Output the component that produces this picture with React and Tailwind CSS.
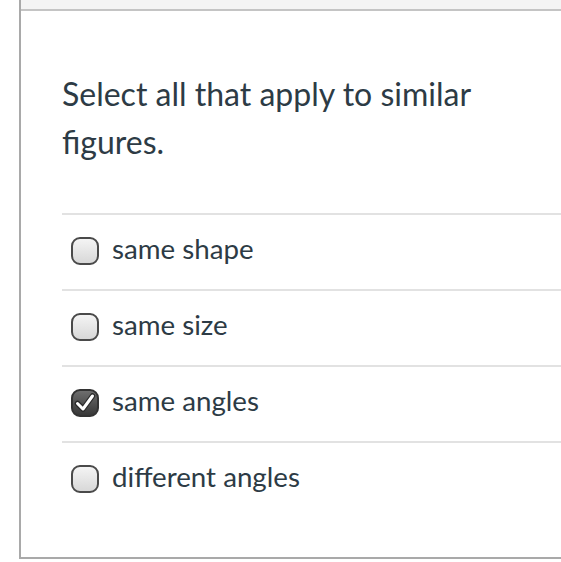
import React from 'react';

const options = [
  { label: 'same shape', checked: false },
  { label: 'same size', checked: false },
  { label: 'same angles', checked: true },
  { label: 'different angles', checked: false },
];

function Box({ checked }) {
  if (checked) {
    return (
      <span className="mb-[3px] flex h-[28px] w-[28px] shrink-0 items-center justify-center rounded-[9px] border-2 border-[#333] bg-gradient-to-b from-[#6e6e6e] to-[#383838]">
        <svg width="22" height="20" viewBox="0 0 22 20">
          <path d="M3.5 10.5 L9 16 L18.5 3" fill="none" stroke="#2a2a2a" strokeWidth="5.5" strokeLinecap="round" strokeLinejoin="round" />
          <path d="M3.5 10.5 L9 16 L18.5 3" fill="none" stroke="#ffffff" strokeWidth="3" strokeLinecap="round" strokeLinejoin="round" />
        </svg>
      </span>
    );
  }
  return (
    <span className="mb-[3px] h-[28px] w-[28px] shrink-0 rounded-[9px] border-[2.5px] border-[#4a4a4a] bg-gradient-to-b from-[#f4f4f4] to-[#d8d8d8]" />
  );
}

export default function App() {
  return (
    <div className="h-[562px] w-[561px] overflow-hidden bg-white font-['Lato','Liberation_Sans',sans-serif] text-[#2d3b45]">
      <div className="ml-[19px] flex h-[559px] flex-col border-b-2 border-l-2 border-[#a9a9a9]">
        {/* header strip */}
        <div className="h-[11px] shrink-0 border-b-2 border-[#c4c4c4] bg-[#f4f4f4]" />

        <div className="pl-[41px] pt-[59px]">
          <p className="w-[450px] text-[32px] leading-[48px]">
            Select all that apply to similar figures.
          </p>

          <div className="mt-[47px]">
            {options.map((o) => (
              <div key={o.label} className="flex h-[76px] items-center gap-[13px] border-t-2 border-[#e2e2e2] pl-[9px]">
                <Box checked={o.checked} />
                <span className="pb-[6px] text-[27.7px] leading-none">{o.label}</span>
              </div>
            ))}
          </div>
        </div>
      </div>
    </div>
  );
}
